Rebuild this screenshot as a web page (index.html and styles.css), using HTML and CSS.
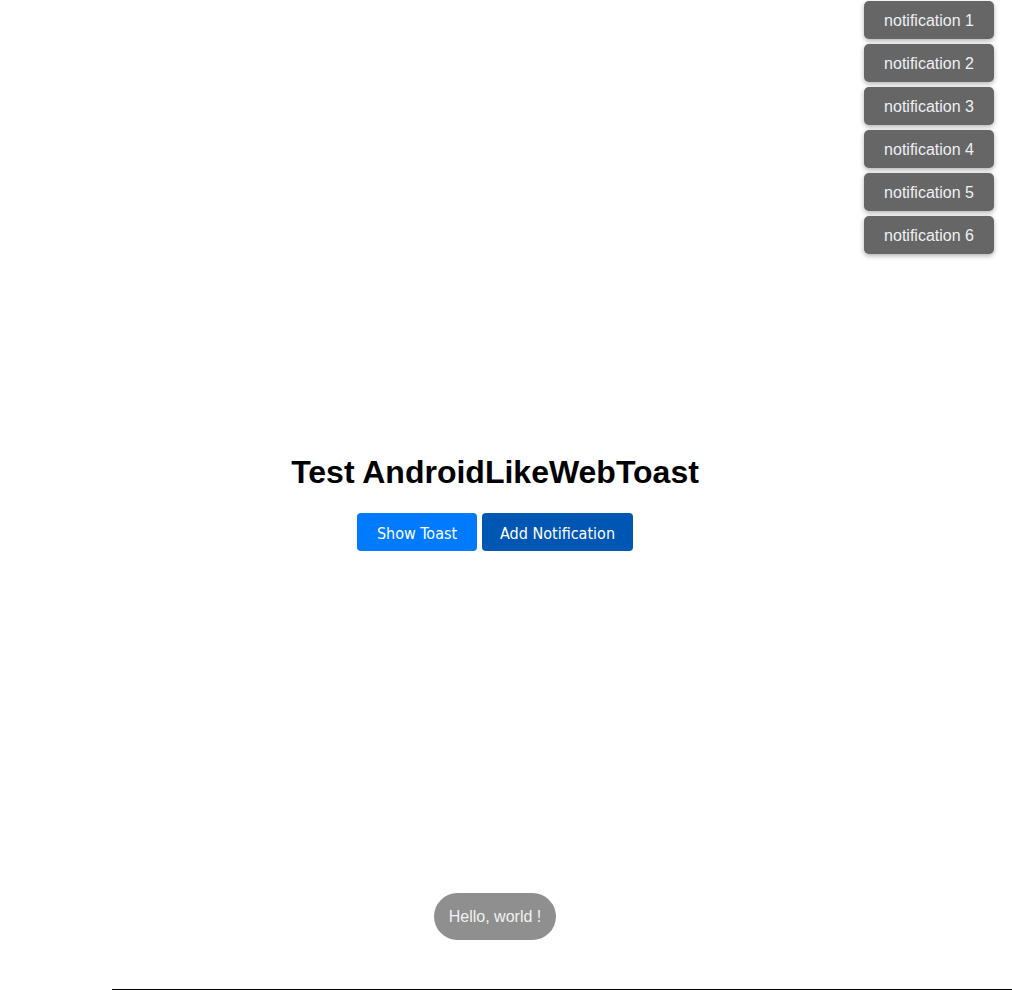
FILE: index.html
```html
<!DOCTYPE html>
<html lang="en">
<head>
<meta charset="utf-8">
<title>Test AndroidLikeWebToast</title>
<link rel="stylesheet" href="styles.css">
</head>
<body>
  <main class="stage">
    <h1 class="title">Test AndroidLikeWebToast</h1>
    <div class="actions">
      <button class="btn btn-primary" type="button">Show Toast</button>
      <button class="btn btn-dark" type="button">Add Notification</button>
    </div>
  </main>
  <div class="rule"></div>

  <div class="notifications">
    <div class="notification">notification 1</div>
    <div class="notification">notification 2</div>
    <div class="notification">notification 3</div>
    <div class="notification">notification 4</div>
    <div class="notification">notification 5</div>
    <div class="notification">notification 6</div>
  </div>

  <div class="toast">Hello, world !</div>
</body>
</html>
```
FILE: styles.css
```css
html, body {
  margin: 0;
  padding: 0;
  background: #fff;
}

body {
  position: relative;
  width: 1012px;
  height: 990px;
  overflow: hidden;
  font-family: "Liberation Sans", Arial, sans-serif;
  display: flex;
  flex-direction: column;
}

.stage {
  width: 990px;
  flex: 1;
  display: flex;
  flex-direction: column;
  align-items: center;
  padding-top: 454px;
  box-sizing: border-box;
}

.title {
  margin: 0 0 22px;
  font-size: 32px;
  font-weight: bold;
  color: #000;
  line-height: 37px;
}

.actions {
  display: flex;
  gap: 5px;
}

.btn {
  font-family: "DejaVu Sans", sans-serif;
  font-stretch: condensed;
  font-size: 16px;
  color: #fff;
  border: none;
  border-radius: 4px;
  height: 38px;
  padding: 2px 0 0;
  cursor: pointer;
}

.btn-primary {
  background: #007bff;
  width: 120px;
}

.btn-dark {
  background: #0056b3;
  width: 151px;
}

.rule {
  margin-left: 112px;
  height: 1px;
  background: #000;
}

.notifications {
  position: absolute;
  top: 1px;
  right: 18px;
  display: flex;
  flex-direction: column;
  gap: 5px;
}

.notification {
  width: 130px;
  height: 38px;
  box-sizing: border-box;
  padding: 2px 10px 0;
  display: flex;
  align-items: center;
  justify-content: center;
  background: #666;
  color: #eef0f4;
  font-size: 16px;
  border-radius: 5px;
  box-shadow: 0 2px 5px rgba(0, 0, 0, 0.3);
}

.toast {
  position: absolute;
  left: 434px;
  top: 893px;
  width: 122px;
  height: 47px;
  box-sizing: border-box;
  display: flex;
  align-items: center;
  justify-content: center;
  background: #8f8f8f;
  color: #f2f2f2;
  font-size: 16px;
  border-radius: 24px;
}
```
